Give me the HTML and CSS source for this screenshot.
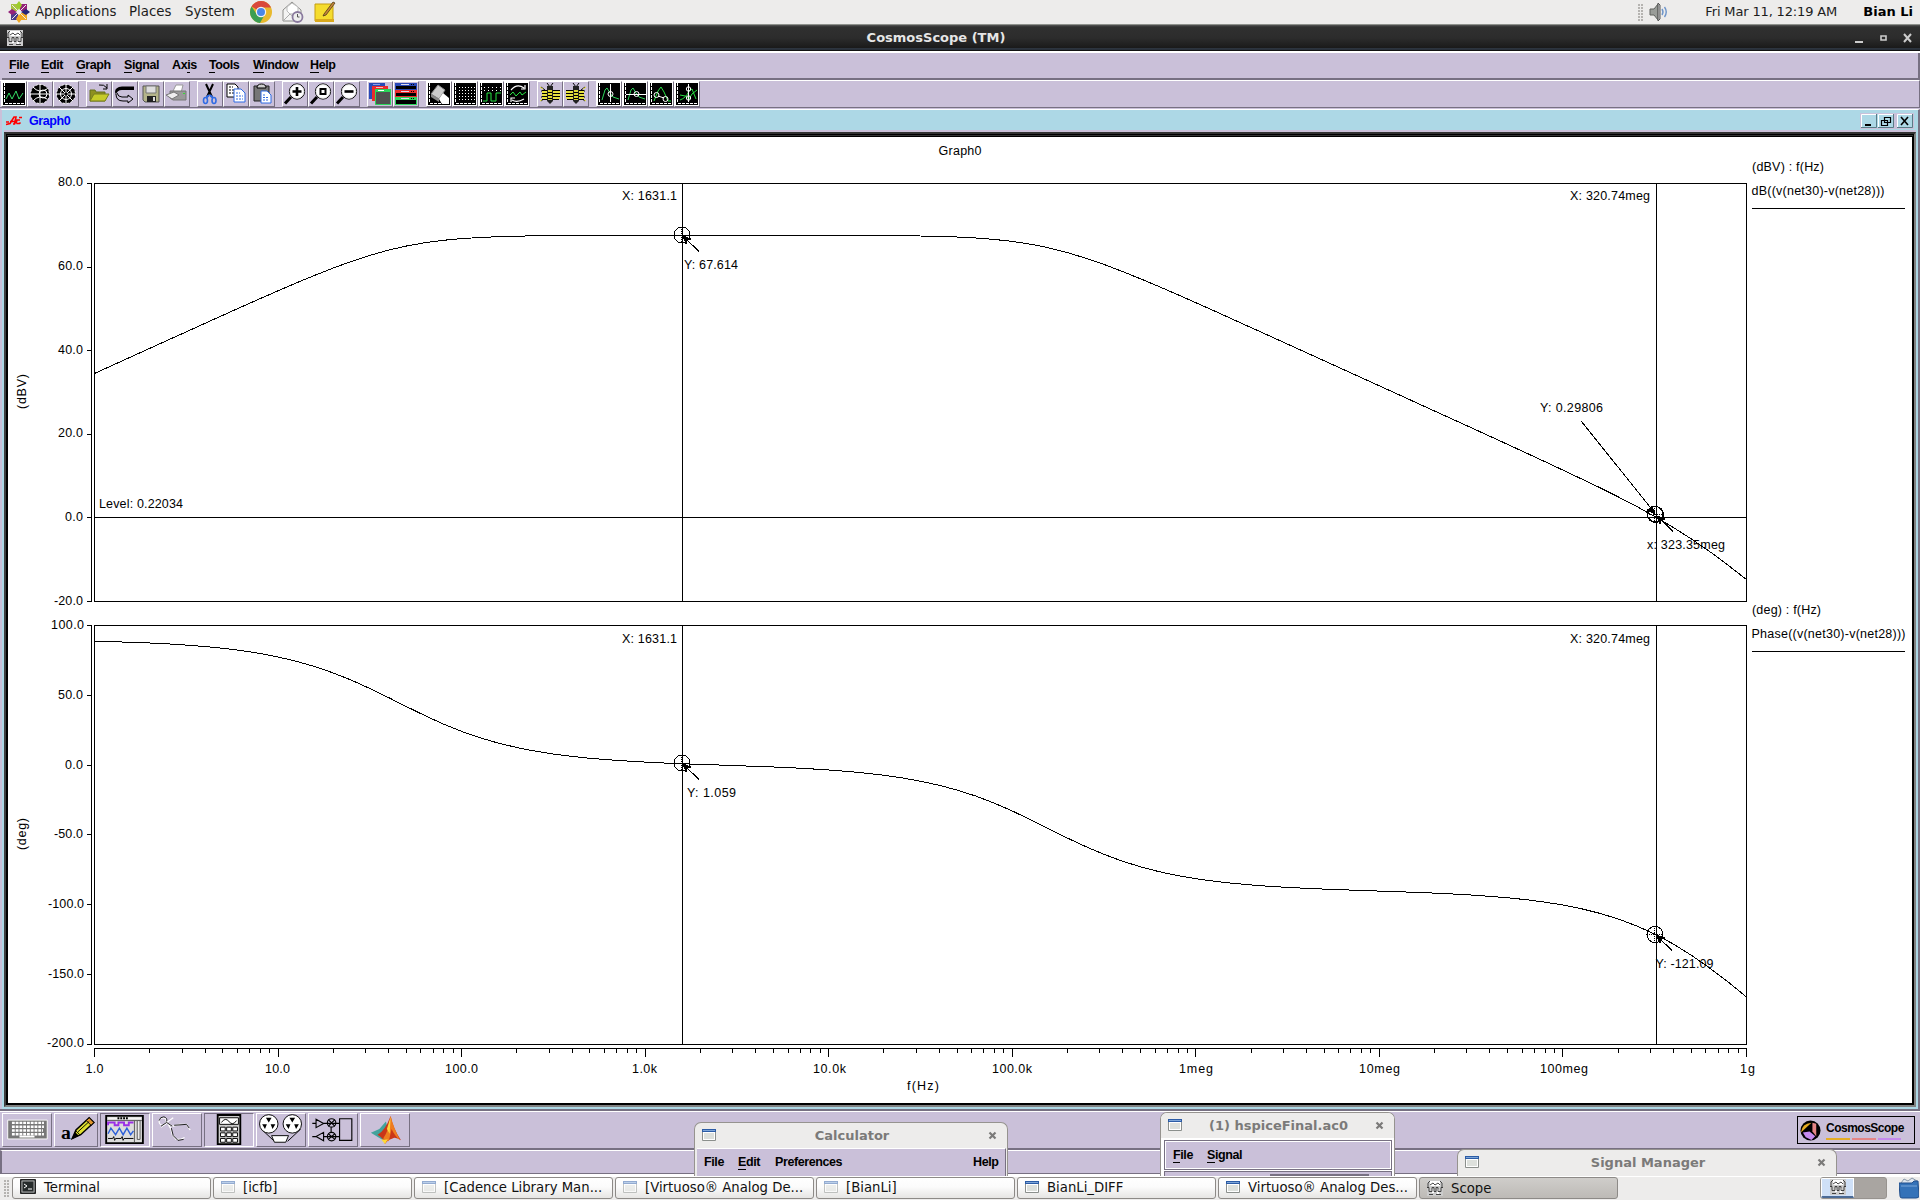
FILE: index.html
```html
<!DOCTYPE html>
<html lang="en">
<head>
<meta charset="utf-8">
<title>CosmosScope (TM)</title>
<link rel="stylesheet" href="styles.css">
</head>
<body>
<svg class="defs" width="0" height="0" aria-hidden="true">
  <defs>
    <symbol id="plate" viewBox="0 0 24 24"><path fill="#fff" d="M0 0h24v24H0z"/><path fill="#000" d="M1 1h22v22H1z"/><path d="M2.500 1v20M3 21.500h20" stroke="#fff" stroke-dasharray="3 1"/></symbol>
    <symbol id="win" viewBox="0 0 14 12"><path fill="#fff" stroke="#8b8f8c" d="M.5.5h13v11H.5z"/><path fill="#dde0dc" d="M2 4h10v6H2z"/><path fill="#2c5ca6" d="M0 0h14v3H0z"/><path fill="#7da5d8" d="M1 1h12v1H1z"/></symbol>
    <symbol id="scope" viewBox="0 0 16 16"><path fill="#ccc" d="M0 0h16v16H0z"/><path fill="#fff" d="M3 1h10v5H3zM5 9h2v4H5zM10 9h2v5h-2z"/><path d="M1 8V3l2-2M15 8V3l-2-2M3 5l3-2 2 2 3-2 2 2M0 7.500h2v4h3v-4h2v4h2v-4h2v4h3v-4h2M2 14.500h4M9 14.500h5" stroke="#333" fill="none" stroke-width=".9"/></symbol>
    <symbol id="lens" viewBox="0 0 24 24"><path d="M8 15 2 21.500" stroke="#000" stroke-width="3"/><circle cx="14" cy="9.500" r="7.600" fill="#fff" stroke="#000"/><circle cx="14" cy="9.500" r="6.800" fill="none" stroke="#ddd" stroke-width=".8"/></symbol>
    <symbol id="bug" viewBox="0 0 24 24"><path d="M9 1l3 4 3-4M3 5l4 3M3 19l4-3M3 9h4M3 15h4" stroke="#000" fill="none"/><path d="M5 7l-3-2M5 17l-3 2" stroke="#e6e040" /><path d="M4 8h18v9H4z" fill="#e6e040"/><path d="M4 8.500h18M4 11.500h18M4 14.500h18M4 17.500h17" stroke="#000"/><path d="M9 4h6v15l-3 3-3-3z" fill="#222"/><path d="M10 8h4v10h-4z" fill="#dcd632"/><path d="M10 10.500h4M10 13.500h4M10 16.500h4" stroke="#000"/></symbol>
    <symbol id="x" viewBox="0 0 9 9"><path d="M1.500 1.500l6 6M7.500 1.500l-6 6" stroke="currentColor" stroke-width="2.200"/></symbol>
  </defs>
</svg>

<header class="panel">
  <svg class="panel-logo" viewBox="0 0 22 22"><path d="M3 3h7v7H3z" fill="#a8c441"/><path d="M12 3h7v7h-7z" fill="#932279"/><path d="M3 12h7v7H3z" fill="#4a3c8c"/><path d="M12 12h7v7h-7z" fill="#efa724"/><path d="M11 0l3 4-3 5-3-5z" fill="#9ccd2a"/><path d="M22 11l-4-3-5 3 5 3z" fill="#262577"/><path d="M0 11l4-3 5 3-5 3z" fill="#932279"/><path d="M11 22l-3-4 3-5 3 5z" fill="#efa724"/><path d="M4 4l14 14M18 4L4 18" stroke="#edeceb" stroke-width="1"/></svg>
  <nav class="panel-menu"><span>Applications</span><span>Places</span><span>System</span></nav>
  <svg class="launch" viewBox="0 0 22 22"><circle cx="11" cy="11" r="11" fill="#e8b92d"/><path d="M11 11L1.500 5.500A11 11 0 0 1 20.500 5.500L21 6.500H11z" fill="#d9483b"/><path d="M1.500 5.500A11 11 0 0 0 10 22l4-7-6 0z" fill="#3c9e53"/><circle cx="11" cy="11" r="5.200" fill="#f4f4f4"/><circle cx="11" cy="11" r="4" fill="#4a87e8"/></svg>
  <svg class="launch" viewBox="0 0 22 22"><path d="M1 9l9-8 9 8v11H1z" fill="#f4f4f3" stroke="#8d8d8a"/><path d="M5 10V6l5-4 6 4v4l-6 5z" fill="#fff" stroke="#bbb"/><path d="M1 20l7-7h4l7 7" fill="none" stroke="#aaa"/><circle cx="15.500" cy="16" r="5" fill="#eee" stroke="#8a7a9e" stroke-width="1.800"/><path d="M15.500 13v3h2" stroke="#555" fill="none"/></svg>
  <svg class="launch" viewBox="0 0 22 22"><path d="M1 3h18v17H1z" fill="#f5dc2e" stroke="#c59d10"/><path d="M1 18h19v3H1z" fill="#d9a91c"/><path d="M10 13L19 1l2 1-9 12-3 1z" fill="#c8863a" stroke="#4c3a1b" stroke-width=".8"/></svg>
  <div class="spacer"></div>
  <span class="grip"></span>
  <svg class="speaker" viewBox="0 0 20 20"><path d="M1 7h4l4-5v16l-4-5H1z" fill="#999c98" stroke="#60635f"/><path d="M9 1l2 2v14l-2 2z" fill="#ccc" stroke="#555"/><path d="M13 7q2 3 0 6M15.500 5q3.500 5 0 10" stroke="#6d94c9" stroke-width="1.400" fill="none"/></svg>
  <span class="clock">Fri Mar 11, 12:19 AM</span>
  <span class="user">Bian Li</span>
</header>

<div class="titlebar">
  <svg class="title-icon"><use href="#scope"/></svg>
  <h1>CosmosScope (TM)</h1>
  <svg class="title-buttons" viewBox="0 0 60 16"><path d="M2 11h8v2H2z" fill="#ccc"/><path d="M28 6h5v4h-5z" fill="none" stroke="#ccc" stroke-width="1.600"/><path d="M51 4l7 8M58 4l-7 8" stroke="#ccc" stroke-width="2"/></svg>
</div>

<main class="app">
  <nav class="menubar"><span><u>F</u>ile</span><span><u>E</u>dit</span><span><u>G</u>raph</span><span><u>S</u>ignal</span><span>Ax<u>i</u>s</span><span><u>T</u>ools</span><span><u>W</u>indow</span><span><u>H</u>elp</span></nav>

  <div class="toolbar">
    <div class="group">
      <svg viewBox="0 0 24 24"><use href="#plate"/><path d="M4 17l3-6 3 6 4-8 3 8 4-6" stroke="#35dd65" fill="none"/></svg>
      <svg viewBox="0 0 24 24"><circle cx="12" cy="12" r="9.500" fill="#000"/><path d="M2 12h20M12 2v20M5 5q6 7 14 2M5 19q6-7 14-2" stroke="#fff" fill="none"/><circle cx="15" cy="12" r="4" fill="none" stroke="#fff"/><circle cx="12" cy="12" r="9.500" fill="none" stroke="#fff" stroke-dasharray="2 2"/></svg>
      <svg viewBox="0 0 24 24"><circle cx="12" cy="12" r="9.500" fill="#000"/><path d="M2 12h20M12 2v20M5 5l14 14M19 5L5 19" stroke="#fff"/><circle cx="12" cy="12" r="5.500" fill="none" stroke="#fff"/><circle cx="12" cy="12" r="1.500" fill="#000"/><circle cx="12" cy="12" r="9.500" fill="none" stroke="#fff" stroke-dasharray="2 2"/></svg>
    </div>
    <div class="group">
      <svg viewBox="0 0 24 24"><path d="M3 19V8h5l1 2h9v9z" fill="#8f9020" stroke="#66701a"/><path d="M3 19l4-7h15l-4 7z" fill="#c6cb28" stroke="#777d20"/><path d="M12 3q5-1 8 3M20 2v5h-4" stroke="#000" fill="none"/></svg>
      <svg viewBox="0 0 24 24"><path d="M21 4.500H9Q2 5 2 10l1 3q1-5 6-5h12z" fill="#000"/><path d="M3 12q0 7 7 7h5v2l5-4-5-4v2H9q-4 0-5-4" stroke="#000" fill="#cac0d9"/></svg>
      <svg viewBox="0 0 24 24"><path d="M4 4h16v16H6l-2-2z" fill="#b4b48a" stroke="#555"/><path d="M7 4h10v7H7z" fill="#ddd" stroke="#777"/><path d="M8 14h9v6H8z" fill="#222"/><path d="M14 15h2v4h-2z" fill="#ddd"/></svg>
      <svg viewBox="0 0 24 24"><path d="M8 9l3-6h7l-2 8z" fill="#fff" stroke="#999"/><path d="M5 9h16v9H8l-3-2z" fill="#999" stroke="#777"/><path d="M1 13l8-3 5 3-7 4z" fill="#eee" stroke="#777"/><path d="M18 11h2v1h-2z" fill="#3d3"/></svg>
    </div>
    <div class="group">
      <svg viewBox="0 0 24 24"><path d="M8 2l6 13M15 2L9 15" stroke="#000" stroke-width="2"/><path d="M11 13l-3 3M12 13l3 3" stroke="#2f6be4" stroke-width="2"/><ellipse cx="7.500" cy="18.500" rx="2" ry="3" fill="none" stroke="#2f6be4" stroke-width="1.600"/><ellipse cx="16" cy="18.500" rx="2" ry="3" fill="none" stroke="#2f6be4" stroke-width="1.600"/></svg>
      <svg viewBox="0 0 24 24"><path d="M3 2h8l3 3v10H3z" fill="#fff" stroke="#000"/><path d="M5 5h4M5 8h6M5 11h6" stroke="#000" stroke-dasharray="2 1"/><path d="M10 7h7l4 4v9H10z" fill="#fff" stroke="#2f6be4"/><path d="M12 11h4M12 14h7M12 17h7" stroke="#2f6be4" stroke-dasharray="2 1"/></svg>
      <svg viewBox="0 0 24 24"><path d="M4 4h15v15H4z" fill="#777" stroke="#222"/><path d="M7 6q0-4 4.500-4T16 6z" fill="#ccc" stroke="#000"/><path d="M11 9h6l4 4v8H11z" fill="#fff" stroke="#2f6be4"/><path d="M13 13h3M13 15.500h6M13 18h6" stroke="#2f6be4" stroke-dasharray="2 1"/></svg>
    </div>
    <div class="group">
      <svg viewBox="0 0 24 24"><use href="#lens"/><path d="M14 5v9M9.500 9.500h9" stroke="#000" stroke-width="2.600"/></svg>
      <svg viewBox="0 0 24 24"><use href="#lens"/><path d="M11.500 7h5v5h-5z" fill="none" stroke="#000" stroke-width="2"/></svg>
      <svg viewBox="0 0 24 24"><use href="#lens"/><path d="M9.500 9.500h9" stroke="#000" stroke-width="2.600"/></svg>
    </div>
    <div class="group">
      <svg viewBox="0 0 24 24"><path d="M1 1h16v16H1z" fill="#2949b8"/><path d="M5 2.500h7" stroke="#8ba0e8"/><path d="M4 4h16v15H4z" fill="#ea2b2b"/><path d="M8 5.500h7" stroke="#fbb"/><path d="M7.500 7.500h15v15h-15z" fill="#505050" stroke="#2bd65a"/><path d="M7 7h16v3H7z" fill="#2bd65a"/><path d="M10 8.500h6" stroke="#fff"/></svg>
      <svg viewBox="0 0 24 24"><path d="M1 1h22v7H1z" fill="#2949b8"/><path d="M2 4h20v3H2z"/><path d="M1 8h22v7H1z" fill="#ea2b2b"/><path d="M2 11h20v3H2z"/><path d="M1 15h22v8H1z" fill="#2bd65a"/><path d="M2 18h20v4H2z"/><path d="M7 2.500h8M7 9.500h8M7 16.500h8" stroke="#dde"/><path d="M17 2.500h4M17 9.500h4M17 16.500h4" stroke="#000" stroke-dasharray="1"/></svg>
    </div>
    <div class="group">
      <svg viewBox="0 0 24 24"><use href="#plate"/><path d="M4 12l7-9 7 5-6 9z" fill="#ccc" stroke="#888"/><path d="M4 12l8 5v3l-8-5z" fill="#888"/><path d="M12 17l4-6 6 5v6h-7z" fill="#fff"/></svg>
      <svg viewBox="0 0 24 24"><use href="#plate"/><path d="M6 5.500h16M6 8.500h16M6 11.500h16M6 14.500h16M6 17.500h16" stroke="#fff" stroke-dasharray="1 2"/></svg>
      <svg viewBox="0 0 24 24"><use href="#plate"/><path d="M5 5.500h17M5 8.500h17" stroke="#fff" stroke-dasharray="1 3"/><path d="M4 19h4v-8h4v8h5v-8h5" stroke="#27e343" fill="none"/></svg>
      <svg viewBox="0 0 24 24"><use href="#plate"/><path d="M6 8q6-7 13-2M20 3v4h-4M19 17q-7 4-12 1M6 20v-4h4" stroke="#fff" stroke-width="1.200" fill="none"/><path d="M5 13l3-3 3 4 4-4 2 3 4-3" stroke="#27e343" fill="none"/></svg>
    </div>
    <div class="group">
      <svg viewBox="0 0 24 24"><use href="#bug"/></svg>
      <svg viewBox="0 0 24 24"><use href="#bug" width="24" height="24" transform="translate(24) scale(-1 1)"/></svg>
    </div>
    <div class="group">
      <svg viewBox="0 0 24 24"><use href="#plate"/><path d="M5 18L8 8l2-2 3 5 3 4 6 2" stroke="#2bd65a" fill="none"/><path d="M13.500 2v18" stroke="#fff"/><circle cx="13.500" cy="12" r="2.500" fill="none" stroke="#fff"/></svg>
      <svg viewBox="0 0 24 24"><use href="#plate"/><path d="M5 18L8 8l2-2 3 5 3 4 6 2" stroke="#2bd65a" fill="none"/><path d="M3 12.500h20" stroke="#fff"/><circle cx="13.500" cy="12" r="2.500" fill="none" stroke="#fff"/></svg>
      <svg viewBox="0 0 24 24"><use href="#plate"/><path d="M5 19L9 9l3-4 3 5 4 9h3" stroke="#27e343" fill="none"/><circle cx="7.500" cy="13" r="2.500" fill="none" stroke="#fff"/><circle cx="16.500" cy="17" r="2.500" fill="none" stroke="#fff"/><path d="M9 14l6 2" stroke="#fff"/></svg>
      <svg viewBox="0 0 24 24"><use href="#plate"/><path d="M5 18q6-2 9-9l3-2 4 10M5 13q6 0 9 4l3-5 5-4" stroke="#27e343" fill="none"/><path d="M13.500 2v18" stroke="#fff"/><circle cx="13.500" cy="7" r="2.200" fill="none" stroke="#fff"/><circle cx="13.500" cy="16" r="2.200" fill="none" stroke="#fff"/></svg>
    </div>
  </div>

  <section class="graph">
    <div class="graph-title">
      <svg class="logo" viewBox="0 0 16 11"><path d="M0 9.500L4 8.500 8 2h2L8.500 9H7M4 6.500h5M10 8.500l1-3.500h3M10.500 8.500h3l1-1M13 2.500h3M0 7h3" stroke="#f00" stroke-width="1.600" fill="none"/></svg>
      <span>Graph0</span>
      <svg class="mdi" viewBox="0 0 52 14"><path fill="#c9c1da" d="M33 0h3v14h-3z"/><path d="M.500 13V.500H15M17.500 13V.500H32M36.500 13V.500H51" stroke="#fff" fill="none"/><path d="M0 13.500h15.500V0M17 13.500h15.500V0M36 13.500h15.500V0" stroke="#5b7b86" fill="none"/><path d="M4 10h6v2H4z"/><path d="M23.500 3.500h6v5h-6zM20.500 6.500h6v5h-6z" fill="#aed9e6" stroke="#000" stroke-width="1.200"/><path d="M40 3l7 8M47 3l-7 8" stroke="#000" stroke-width="1.600"/></svg>
    </div>
    <svg class="plot" viewBox="7 136 1906 968">
      <g class="lines">
        <path d="M94.500 183.500H1746.500V601.500H94.500zM94.500 625.500H1746.500V1044.500H94.500zM94.500 517.500H1746.500M91.500 183.500V601.500M91.500 625.500V1044.500M94.500 1048.500H1746.500"/>
        <path d="M682.500 183.500V601.500M682.500 625.500V1044.500M1656.500 183.500V601.500M1656.500 625.500V1044.500"/>
        <path d="M1752 208.500H1905M1752 651.500H1905"/>
        <path id="ticks"/>
        <path id="gain"/>
        <path id="phase"/>
        <path d="M699 251.500L684 237M699 779.500L684 765M1581.500 421.500L1654 512M1673 531.500L1658 516.500M1672 950.500L1657 936"/>
        <g><circle cx="682" cy="235" r="8"/><circle cx="682" cy="763" r="8"/><circle cx="1655.500" cy="514.500" r="8"/><circle cx="1655" cy="514" r="7.500"/><circle cx="1655" cy="934.500" r="8"/></g>
        <path class="dots" d="M674 235.500h16M681.500 227v16M674 763.500h16M681.500 755v16M1647 514.500h16M1654.500 506v16M1647 934.500h16M1654.500 926v16"/>
        <path class="fill" d="M683 236l8 3-4 1-1 4zM683 764l8 3-4 1-1 4zM1655 514l-3-8-1 3-4 1zM1657 516l8 3-4 1-1 4zM1656 935l9 3-4 1-1 4z"/>
      </g>
      <g class="labels">
        <text x="938.500" y="155" textLength="43">Graph0</text>
        <text x="58" y="186" textLength="25">80.0</text><text x="58" y="270" textLength="25">60.0</text><text x="58" y="354" textLength="25">40.0</text><text x="58" y="437" textLength="25">20.0</text><text x="65" y="521" textLength="18">0.0</text><text x="54" y="605" textLength="29">-20.0</text>
        <text x="51" y="629" textLength="33">100.0</text><text x="58" y="699" textLength="25">50.0</text><text x="65" y="769" textLength="18">0.0</text><text x="54" y="838" textLength="29">-50.0</text><text x="48" y="908" textLength="36">-100.0</text><text x="48" y="978" textLength="36">-150.0</text><text x="47" y="1047" textLength="37">-200.0</text>
        <text x="85.500" y="1073" textLength="18">1.0</text><text x="265" y="1073" textLength="25">10.0</text><text x="445" y="1073" textLength="33">100.0</text><text x="632" y="1073" textLength="25">1.0k</text><text x="813" y="1073" textLength="33">10.0k</text><text x="992" y="1073" textLength="40">100.0k</text><text x="1179" y="1073" textLength="34">1meg</text><text x="1359" y="1073" textLength="41">10meg</text><text x="1540" y="1073" textLength="48">100meg</text><text x="1740" y="1073" textLength="15">1g</text>
        <text x="907" y="1090" textLength="32">f(Hz)</text>
        <text transform="translate(26 409) rotate(-90)" textLength="35">(dBV)</text>
        <text transform="translate(26 850) rotate(-90)" textLength="32">(deg)</text>
        <text x="99" y="508" textLength="84">Level: 0.22034</text>
        <text x="622" y="200" textLength="55">X: 1631.1</text><text x="622" y="643" textLength="55">X: 1631.1</text>
        <text x="1570" y="200" textLength="80">X: 320.74meg</text><text x="1570" y="643" textLength="80">X: 320.74meg</text>
        <text x="684" y="269" textLength="54">Y: 67.614</text><text x="687" y="797" textLength="49">Y: 1.059</text>
        <text x="1540" y="412" textLength="63">Y: 0.29806</text><text x="1647" y="549" textLength="78">x: 323.35meg</text><text x="1655.500" y="968" textLength="58">Y: -121.09</text>
        <text x="1752" y="171" textLength="72">(dBV) : f(Hz)</text><text x="1751.500" y="195" textLength="133">dB((v(net30)-v(net28)))</text>
        <text x="1752" y="614" textLength="69">(deg) : f(Hz)</text><text x="1751.500" y="638" textLength="154">Phase((v(net30)-v(net28)))</text>
      </g>
    </svg>
  </section>

  <div class="dock">
    <svg class="wide" viewBox="0 0 50 34"><path d="M4.500 6.500h42v20h-42z" fill="#777" stroke="#fff"/><path d="M9 9.500h34M9 13.500h34M9 17.500h33M9 21.500h34" stroke="#fff" stroke-width="2.500" stroke-dasharray="3 1"/><path d="M17 24h16" stroke="#fff" stroke-width="2"/></svg>
    <svg class="narrow" viewBox="0 0 44 34"><text x="6" y="27" class="a">a</text><path d="M18 26l4-9L36 4l5 5-14 13z" fill="#dede30" stroke="#000" stroke-width="1.600"/><path d="M33 7l3-3 5 5-3 3z" fill="#e0952c" stroke="#000"/><path d="M17 27l4-8 4 4z"/><path d="M22 18l4 4M24 19l12-11" stroke="#000"/></svg>
    <svg class="wide down" viewBox="0 0 50 34"><path d="M5 2h39v29H5z" fill="#ddd" stroke="#000" stroke-width="2"/><path d="M7 4.500h35" stroke="#fff"/><path d="M17 4.500h12" stroke="#000" stroke-width="2" stroke-dasharray="2 1"/><path d="M6 7h37M35 7v23" stroke="#555"/><path d="M7 12v-3h7v3h4v-3h6v3h5v-3h5" stroke="#9b30e6" stroke-width="2" fill="none"/><path d="M7 21l3-6 5 7 4-7 4 7 4-7 4 7 3-4" stroke="#2d60d8" stroke-width="1.500" fill="none"/><path d="M7 26h5l1-2 1 4 1-2h6l1-2 1 4 1-2h10" stroke="#000" fill="none"/><path d="M38 7h3v20h-3z" fill="#eee" stroke="#555"/></svg>
    <svg class="wide" viewBox="0 0 50 34"><g fill="none" stroke="#fff" stroke-width="1.300"><circle cx="10" cy="8" r="4"/><path d="M8 14l6-5 7-5M13 6l6 11M14 9l6 4 8-2h7l4 6M18 14l2 8 4 5h5l4-2"/></g><path d="M6 7q1-4 5-4 4 1 3 5M8 13l6-4 6 4M19 15l2 8 5 5 6-1M22 12l13-1 3 4" fill="none" stroke="#111"/></svg>
    <svg class="wide down" viewBox="0 0 50 34"><path d="M13 1h24v31H13z" fill="#ccc" stroke="#000" stroke-width="2"/><path d="M15 4h20v7H15z" fill="#fff" stroke="#000"/><path d="M17 9q4-6 8-1t8-1" stroke="#000" fill="none"/><g fill="#fff" stroke="#000"><path d="M16 14h5v4h-5zM22.500 14h5v4h-5zM29 14h5v4h-5zM16 20h5v4h-5zM22.500 20h5v4h-5zM29 20h5v4h-5zM16 26h5v4h-5zM22.500 26h5v4h-5zM29 26h5v4h-5z"/></g></svg>
    <svg class="wide" viewBox="0 0 50 34"><path d="M4 16l14 13M46 16L32 29" stroke="#000"/><g fill="#fff" stroke="#000"><circle cx="12" cy="10.500" r="9.800"/><circle cx="37" cy="10.500" r="9.800"/><path d="M15 23h18l-3 7H18z"/></g><path d="M12 9L9 4h6zM10 11l-5 0 3 5zM14 11h5l-3 5zM37 9l-3-5h6zM35 11h-5l3 5zM39 11h5l-3 5z"/></svg>
    <svg class="wide" viewBox="0 0 50 34"><g fill="none" stroke="#000" stroke-width="1.200"><path d="M3 10h4V5.500l8 4.500-8 4.500V10M15 10h17M3 24h4M15 19.500v9L7 24zM15 24h17M23 14v6M32 5h13v23H32z"/><circle cx="23.500" cy="9.500" r="4.500"/><circle cx="23.500" cy="24" r="4.500"/><path d="M20 6l7 7M27 6l-7 7M20 21l7 6M27 21l-7 6"/></g></svg>
    <svg class="wide" viewBox="0 0 50 34"><path d="M10 20l9-4 7-8 3 12-6 8z" fill="#43a39c"/><path d="M17 22q8-4 14-20 2 12 11 26-6-4-9-2-6 2-8 6-2-7-8-10z" fill="#ca3518"/><path d="M31 2q-2 16-8 24l6 3 3-13q3 7 9 12Q34 14 31 2z" fill="#ee7c20"/><path d="M31 3l-1 18-3-5z" fill="#ffd43e"/><path d="M21 27l7 0-3 5z" fill="#ffda35"/></svg>
    <div class="spacer"></div>
    <div class="brand">
      <svg viewBox="0 0 22 22"><circle cx="11" cy="11" r="10.500"/><path d="M1 13Q2 4 12 3z" fill="#e5ad24"/><path d="M13 3l4 1v13l-4-5z" fill="#e58585"/><path d="M3 13l7-1 6 5-4 4-6-3z" fill="#c58aee"/></svg>
      <div><b>CosmosScope</b><i class="c1"></i><i class="c2"></i><i class="c3"></i></div>
    </div>
  </div>
  <div class="status"></div>
</main>

<div class="float calc">
  <div class="ftitle"><svg class="wi"><use href="#win"/></svg><span>Calculator</span><svg class="cl"><use href="#x"/></svg></div>
  <div class="fmenu"><span>File</span><span><u>E</u>dit</span><span>Preferences</span><span>Help</span></div>
</div>
<div class="float hspice">
  <div class="ftitle"><svg class="wi"><use href="#win"/></svg><span>(1) hspiceFinal.ac0</span><svg class="cl"><use href="#x"/></svg></div>
  <div class="fmenu"><span><u>F</u>ile</span><span><u>S</u>ignal</span></div>
  <div class="fbody"><i></i></div>
</div>
<div class="float sigman">
  <div class="ftitle"><svg class="wi"><use href="#win"/></svg><span>Signal Manager</span><svg class="cl"><use href="#x"/></svg></div>
</div>

<footer class="taskbar">
  <span class="grip"></span>
  <div class="tasks">
    <div><svg class="ti" viewBox="0 0 16 16"><path fill="#454a4a" stroke="#222" d="M.500.500h15v14H.500z"/><path fill="#262b2b" stroke="#aaa" d="M2 2h12v11H2z"/><path d="M4 5l3 2-3 2M8 10h4" stroke="#fff" fill="none"/></svg>Terminal</div>
    <div class="min"><svg class="wi"><use href="#win"/></svg>[icfb]</div>
    <div class="min"><svg class="wi"><use href="#win"/></svg>[Cadence Library Man...</div>
    <div class="min"><svg class="wi"><use href="#win"/></svg>[Virtuoso® Analog De...</div>
    <div class="min"><svg class="wi"><use href="#win"/></svg>[BianLi]</div>
    <div><svg class="wi"><use href="#win"/></svg>BianLi_DIFF</div>
    <div><svg class="wi"><use href="#win"/></svg>Virtuoso® Analog Des...</div>
    <div class="on"><svg class="ti"><use href="#scope"/></svg>Scope</div>
  </div>
  <div class="spacer"></div>
  <div class="pager"><span><svg class="ti"><use href="#scope"/></svg></span><span></span></div>
  <svg class="trash" viewBox="0 0 20 22"><path d="M2 6l3-4 4 2 4-3 5 3v5H2z" fill="#dfe6ee" stroke="#8898a8"/><path d="M0 6h13l2-2h4l1 15q0 2-3 2H3q-2 0-2-2z" fill="#3472b8" stroke="#204f8c"/><path d="M2 9h16" stroke="#78a6da"/></svg>
</footer>
<script src="plot.js"></script>
</body>
</html>
```
FILE: styles.css
```css
* { box-sizing: border-box; }
body { margin: 0; width: 1920px; height: 1200px; overflow: hidden; position: relative; display: flex; flex-direction: column; background: #cac0d9; font: 13.33px "DejaVu Sans", sans-serif; color: #1c1c1c; }
svg { display: block; flex: none; }
.defs { position: absolute; }
.spacer { flex: 1; }
u { text-decoration: none; border-bottom: 1px solid #000; }

.panel { height: 25px; flex: none; display: flex; align-items: center; background: #edeceb; border-bottom: 1px solid #8e918c; padding: 0 7px 0 8px; }
.panel-logo { width: 22px; height: 22px; }
.panel-menu { display: grid; grid-template-columns: 94px 56px 65px; padding: 0 0 1px 5px; }
.launch { width: 22px; height: 22px; margin-right: 10px; }
.panel > span { white-space: nowrap; }
.grip { width: 5px; height: 17px; background: radial-gradient(circle at 1px 1px, #b5b3b0 1px, transparent 1.200px) 0 0 / 3px 3px; }
.speaker { width: 20px; height: 20px; margin: 0 36px 0 6px; }
.clock { width: 158px; font-size: 13px; letter-spacing: -.15px; padding-bottom: 1px; }
.user { font-weight: bold; color: #000; font-size: 13px; padding-bottom: 1px; }

.titlebar { height: 26px; flex: none; display: flex; align-items: center; padding: 0 7px; background: linear-gradient(#555 0, #303030 2px, #2c2c2c 50%, #1a1a1a 23px, #3f4e62 24px, #111 25px); }
.title-icon { width: 16px; height: 16px; }
.titlebar h1 { flex: 1; margin: 0; padding-right: 4px; font-size: 13px; line-height: 26px; text-align: center; color: #e6e6e6; }
.title-buttons { width: 60px; height: 16px; }

.app { display: flex; flex-direction: column; flex: none; border-top: 2px solid #fff; height: 1125px; }
.menubar { height: 27px; flex: none; margin-left: 2px; border-bottom: 2px solid #777082; border-right: 2px solid #777082; padding: 5px 0 0 7px; display: grid; grid-template-columns: 32px 35px 48px 48px 37px 44px 57px auto; }
.menubar, .fmenu, .graph-title { font: bold 12.500px "Liberation Sans", sans-serif; letter-spacing: -.4px; color: #000; }
.menubar span, .fmenu span { line-height: 14px; }
.toolbar { height: 28px; flex: none; border-top: 1px solid #fff; border-bottom: 1px solid #777082; border-right: 1px solid #777082; padding-left: 1px; display: flex; gap: 7px; }
.group { display: flex; }
.group svg { width: 26px; height: 26px; border: 1px solid; border-color: #fff #777082 #777082 #fff; }

.graph { flex: none; margin-top: 1px; padding: 0 2px 2px; background: #add8e6; height: 1000px; border-right: 2px solid #777082; border-left: 2px solid #cac0d9; border-top: 1px solid #fff; display: flex; flex-direction: column; }
.graph-title { height: 22px; flex: none; display: flex; align-items: center; padding: 1px 3px 0 2px; border-bottom: 2px solid #cac0d9; color: #00f; }
.logo { width: 16px; height: 11px; margin-right: 7px; }
.mdi { width: 52px; height: 14px; margin-left: auto; outline: 1px solid #c9c1da; }
.plot { width: 1912px; height: 975px; flex: none; background: #fff; border: solid; border-width: 4px 3px 3px; border-color: #333 #808080 #808080 #404040; box-shadow: inset 0 0 0 1px #000; outline: 1px solid #000; outline-offset: -3px; }
.lines { fill: none; stroke: #000; stroke-width: 1; shape-rendering: crispEdges; }
.dots { stroke-dasharray: 1 1; }
.fill { fill: #000; }
.labels { font: 12.500px "Liberation Sans", sans-serif; fill: #000; }

.dock { height: 39px; flex: none; margin-top: 2px; border-top: 1px solid #fff; border-bottom: 2px solid #777082; box-shadow: 0 -2px #777082; display: flex; gap: 2px; padding: 1px 5px 0 2px; }
.dock > svg { height: 34px; border: 1px solid; border-color: #fff #777082 #777082 #fff; }
.wide { width: 50px; }
.narrow { width: 44px; }
.dock > .down { border-color: #777082 #fff #fff #777082; }
.a { font: bold 21px "Liberation Serif", serif; }
.brand { width: 118px; height: 28px; margin-top: 3px; border: 1px solid #000; display: flex; align-items: center; padding-left: 2px; gap: 5px; }
.brand svg { width: 21px; height: 21px; }
.brand div { display: grid; grid-template-columns: 24px 24px 23px; gap: 2px; }
.brand b { grid-column: span 3; font: bold 12px "Liberation Sans", sans-serif; letter-spacing: -.5px; line-height: 15px; color: #000; }
.brand i { height: 2px; }
.c1 { background: #e5ad24; } .c2 { background: #e58585; } .c3 { background: #c58aee; }
.status { height: 24px; flex: none; border-top: 1px solid #fff; border-left: 2px solid #777082; border-bottom: 1px solid #777082; box-shadow: 0 2px #fff; }

.float { position: absolute; background: #edeceb; border: 1px solid #96938f; border-bottom: 0; border-radius: 7px 7px 0 0; overflow: hidden; }
.ftitle { height: 25px; display: flex; align-items: center; padding: 0 10px 1px 7px; color: #7b7a79; font-size: 13px; font-weight: bold; }
.ftitle span { flex: 1; text-align: center; }
.wi { width: 14px; height: 12px; }
.cl { width: 9px; height: 9px; }
.fmenu { background: #cac0d9; display: grid; border-top: 1px solid #fff; border-right: 1px solid #777082; margin: 0 1px 0 2px; }
.calc { left: 694px; top: 1122px; width: 314px; height: 54px; }
.calc .fmenu { height: 28px; padding: 6px 0 0 7px; grid-template-columns: 34px 37px 198px auto; }
.hspice { left: 1160px; top: 1112px; width: 235px; height: 64px; background: #fff; }
.hspice .ftitle { background: #edeceb; }
.hspice .fmenu { height: 30px; margin: 2px 2px 0 3px; border: 1px solid #777082; box-shadow: inset 0 0 0 1px #fff; padding: 7px 0 0 8px; grid-template-columns: 34px auto; }
.fbody { height: 6px; margin: 1px 2px 0 3px; background: #cac0d9; border: 1px solid #777082; display: flex; justify-content: flex-end; padding-right: 22px; }
.fbody i { width: 99px; height: 5px; margin-top: 2px; background: #777082; }
.sigman { left: 1457px; top: 1149px; width: 380px; height: 27px; }

.taskbar { height: 24px; flex: none; z-index: 2; display: flex; align-items: flex-start; background: #edeceb; border-top: 1px solid #fff; padding: 0 1px 0 4px; }
.taskbar .grip { margin-top: 3px; }
.tasks { display: flex; gap: 2px; margin-left: 3px; }
.tasks > div { width: 199px; height: 22px; border: 1px solid #8d8a87; border-radius: 3px; background: linear-gradient(#fff, #fbfbfb 45%, #e6e5e3); display: flex; align-items: center; gap: 8px; padding: 0 0 2px 7px; font-size: 13.25px; white-space: nowrap; color: #111; }
.tasks .min .wi { opacity: .5; }
.tasks > .on { background: linear-gradient(#cfcdca, #bdbab6); padding-bottom: 0; }
.ti { width: 16px; height: 16px; }
.pager { width: 67px; height: 22px; display: flex; background: #a9a5a1; border: 1px solid #97938f; border-radius: 3px; overflow: hidden; margin-right: 12px; }
.pager span:first-child { width: 33px; background: #cfe0f7; border: 1px solid #fff; border-bottom: 2px solid #4b6b97; display: flex; justify-content: center; }
.trash { width: 20px; height: 22px; }
```
FILE: plot.js
```js
// Frequency axis: nine decades from 1 Hz to 1 GHz.
const X0 = 94.5, DECADE = 1652 / 9;
const deg = (a) => a * 180 / Math.PI;
const xOf = (f) => X0 + Math.log10(f) * DECADE;

// Band-pass amplifier response.
const gainDb = (f) => 67.614
  - 10 * Math.log10(1 + (45 / f) ** 2)
  - 10 * Math.log10(1 + (f / 158e3) ** 2)
  - 10 * Math.log10(1 + (f / 550e6) ** 2);
const phaseDeg = (f) => 90 - deg(Math.atan(f / 45)) - deg(Math.atan(f / 155e3))
  - deg(Math.atan(f / 700e6)) - 21 * f / 1e9;

function trace(fn, bottom, min, scale) {
  const pts = [];
  for (let i = 0; i <= 90; i++) {
    const f = 10 ** (i / 10);
    pts.push(xOf(f).toFixed(1) + "," + (bottom - (fn(f) - min) * scale).toFixed(1));
  }
  return "M" + pts.join("L");
}

let ticks = "";
for (let d = 0; d <= 9; d++) {
  ticks += `M${Math.floor(xOf(10 ** d)) + 0.5} 1048V1057`;
  for (let n = 2; d < 9 && n < 10; n++) ticks += `M${Math.floor(xOf(n * 10 ** d)) + 0.5} 1048V1053`;
}
for (let i = 0; i <= 5; i++) ticks += `M87 ${Math.floor(183.5 + i * 83.6) + 0.5}H92`;
for (let i = 0; i <= 6; i++) ticks += `M87 ${Math.floor(625.5 + i * 69.83) + 0.5}H92`;

document.getElementById("ticks").setAttribute("d", ticks);
document.getElementById("gain").setAttribute("d", trace(gainDb, 601.5, -20, 4.18));
document.getElementById("phase").setAttribute("d", trace(phaseDeg, 1044.5, -200, 1.3967));
```
